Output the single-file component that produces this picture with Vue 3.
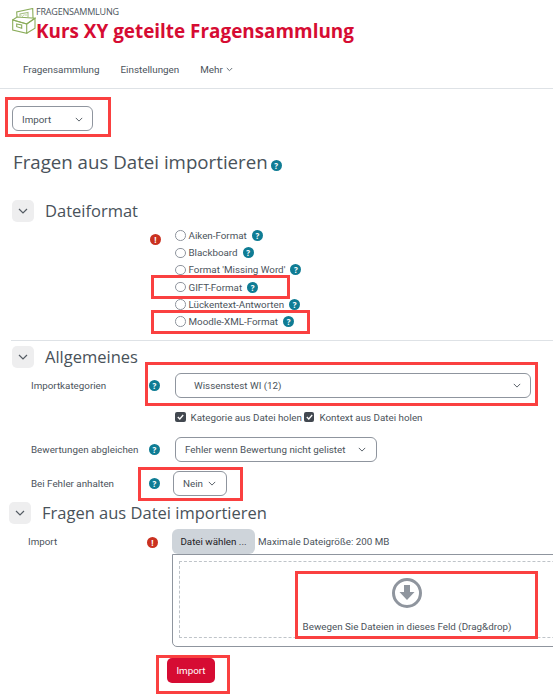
<template>
  <div class="page">
    <header class="page-head">
      <div class="brand">
        <svg class="logo" viewBox="0 0 24 26" width="24" height="26" fill="none" stroke="#8bad5b" stroke-width="1.100">
          <path d="M5 9L4.700 4l16-3.500.3 9.500" />
          <path d="M8 8.500V6l8-1.500V9" stroke="#a9c285" />
          <path d="M9.500 7.500l1 1 1.500-2M12.500 7h2.500" stroke="#a9c285" stroke-width="0.800" />
          <path d="M.7 12L5 9l18 1.300-8.300 5.700z" />
          <path d="M.7 12v10l14 3.300V16z" />
          <path d="M14.700 16L23 10.300v10l-8.300 5" />
          <path d="M4.700 16l5 1v3.300l-5-1.600z" />
        </svg>
        <div class="brand-text">
          <div class="overline">FRAGENSAMMLUNG</div>
          <h1>Kurs XY geteilte Fragensammlung</h1>
        </div>
      </div>
      <nav class="tabs">
        <span v-for="t in tabs" :key="t">{{ t }}</span>
        <span class="more">Mehr
          <svg width="7" height="5" viewBox="0 0 7 5" fill="none" stroke="#6a737b"><path d="M.8 1l2.700 2.700L6.200 1" /></svg>
        </span>
      </nav>
    </header>

    <div class="tertiary">
      <div class="select action-select">
        <span>Import</span>
        <svg class="chev" width="8" height="5" viewBox="0 0 10 6"><path d="M1 1l4 4 4-4" /></svg>
      </div>
    </div>

    <h2>Fragen aus Datei importieren<i class="help big">?</i></h2>

    <div class="section-head first">
      <button class="toggle"><svg width="10" height="6" viewBox="0 0 10 6"><path d="M1 1l4 4 4-4" /></svg></button>
      <h3>Dateiformat</h3>
    </div>
    <div class="formats">
      <i class="err">!</i>
      <ul>
        <li v-for="f in formats" :key="f">
          <span class="radio"></span>{{ f }}<i class="help">?</i>
        </li>
      </ul>
    </div>

    <div class="section-head general">
      <button class="toggle"><svg width="10" height="6" viewBox="0 0 10 6"><path d="M1 1l4 4 4-4" /></svg></button>
      <h3>Allgemeines</h3>
    </div>

    <div class="form-row r-cat">
      <label>Importkategorien</label>
      <i class="help">?</i>
      <div class="select wide">
        <span>Wissenstest WI (12)</span>
        <svg class="chev" width="8" height="5" viewBox="0 0 10 6"><path d="M1 1l4 4 4-4" /></svg>
      </div>
    </div>
    <div class="checks">
      <span class="check"><svg width="7" height="6" viewBox="0 0 7 6" fill="none" stroke="#fff" stroke-width="1.300"><path d="M.8 3l2 2L6.200 1" /></svg></span>Kategorie aus Datei holen
      <span class="check second"><svg width="7" height="6" viewBox="0 0 7 6" fill="none" stroke="#fff" stroke-width="1.300"><path d="M.8 3l2 2L6.200 1" /></svg></span>Kontext aus Datei holen
    </div>
    <div class="form-row r-grade">
      <label>Bewertungen abgleichen</label>
      <i class="help">?</i>
      <div class="select grade">
        <span>Fehler wenn Bewertung nicht gelistet</span>
        <svg class="chev" width="8" height="5" viewBox="0 0 10 6"><path d="M1 1l4 4 4-4" /></svg>
      </div>
    </div>
    <div class="form-row r-stop">
      <label>Bei Fehler anhalten</label>
      <i class="help">?</i>
      <div class="select stop">
        <span>Nein</span>
        <svg class="chev" width="8" height="5" viewBox="0 0 10 6"><path d="M1 1l4 4 4-4" /></svg>
      </div>
    </div>

    <div class="section-head upload">
      <button class="toggle"><svg width="10" height="6" viewBox="0 0 10 6"><path d="M1 1l4 4 4-4" /></svg></button>
      <h3>Fragen aus Datei importieren</h3>
    </div>
    <div class="file-row">
      <label>Import</label>
      <i class="err">!</i>
      <div class="file-col">
        <div class="file-top">
          <button class="choose">Datei wählen ...</button>
          <span>Maximale Dateigröße: 200 MB</span>
        </div>
        <div class="drop">
          <div class="drop-inner">
            <svg width="32" height="32" viewBox="0 0 32 32">
              <circle cx="16" cy="16" r="13.500" fill="none" stroke="#8f959e" stroke-width="3" />
              <path d="M13 8h6v7h4.500L16 23l-7.500-8H13z" fill="#8f959e" />
            </svg>
            <span>Bewegen Sie Dateien in dieses Feld (Drag&amp;drop)</span>
          </div>
        </div>
      </div>
    </div>
    <div class="submit-row">
      <button class="submit">Import</button>
    </div>

    <!-- annotation boxes drawn over the screenshot -->
    <div
      v-for="m in marks"
      :key="m.id"
      class="mark"
      :style="{ left: m.x + 'px', top: m.y + 'px', width: m.w + 'px', height: m.h + 'px' }"
    ></div>
  </div>
</template>

<script setup>
const tabs = ["Fragensammlung", "Einstellungen"];

const formats = [
  "Aiken-Format",
  "Blackboard",
  "Format 'Missing Word'",
  "GIFT-Format",
  "Lückentext-Antworten",
  "Moodle-XML-Format",
];

const marks = [
  { id: "action", x: 5, y: 97, w: 106, h: 40 },
  { id: "gift", x: 151, y: 275, w: 139, h: 24 },
  { id: "xml", x: 151, y: 310, w: 159, h: 24 },
  { id: "cat", x: 145, y: 362, w: 393, h: 44 },
  { id: "stop", x: 138, y: 467, w: 105, h: 34 },
  { id: "drop", x: 295, y: 571, w: 243, h: 68 },
  { id: "submit", x: 156, y: 655, w: 74, h: 39 },
];
</script>

<style>
html,
body {
  margin: 0;
  overflow: hidden;
  background: #fff;
}
</style>

<style scoped>
.page {
  position: relative;
  width: 553px;
  height: 695px;
  overflow: hidden;
  font-family: Roboto, "Open Sans", sans-serif;
  font-size: 9.800px;
  color: #4b535b;
}

.page-head {
  height: 88px;
  border-bottom: 1px solid #dee2e6;
}

.brand {
  display: flex;
  padding: 7px 0 0 12px;
  height: 50px;
  box-sizing: border-box;
}

.logo {
  margin-top: 1px;
}

.overline {
  font-family: "Open Sans", sans-serif;
  font-size: 9px;
  line-height: 10px;
  letter-spacing: -0.2px;
}

h1 {
  margin: 1px 0 0;
  font-family: "Open Sans", sans-serif;
  font-size: 18.900px;
  line-height: 26px;
  font-weight: 700;
  color: #d60c33;
  white-space: nowrap;
}

.tabs {
  display: flex;
  gap: 21px;
  padding: 12px 0 0 23px;
  font-size: 9.850px;
  line-height: 16px;
}

.more svg {
  margin-left: 1px;
  vertical-align: 1px;
}

.tertiary {
  padding: 17px 0 0 12px;
}

.select {
  display: flex;
  align-items: center;
  justify-content: space-between;
  box-sizing: border-box;
  height: 25px;
  border: 1px solid #8f959e;
  border-radius: 6px;
  background: #fff;
  white-space: nowrap;
}

.chev path,
.toggle path {
  fill: none;
  stroke: #555c64;
  stroke-width: 1.200;
}

.action-select {
  width: 81px;
  padding: 1px 9px 0;
}

h2 {
  margin: 18px 0 0 13px;
  font-family: "Open Sans", sans-serif;
  font-size: 18.700px;
  line-height: 26px;
  font-weight: 400;
  color: #49525a;
  white-space: nowrap;
}

h3 {
  margin: 0;
  font-family: "Open Sans", sans-serif;
  font-size: 16.500px;
  line-height: 22px;
  font-weight: 400;
  color: #49525a;
  white-space: nowrap;
}

.help,
.err {
  display: inline-block;
  flex: none;
  width: 11px;
  height: 11px;
  border-radius: 50%;
  background: #0f7c94;
  color: #fff;
  font-family: "Open Sans", sans-serif;
  font-style: normal;
  font-weight: 700;
  font-size: 8px;
  line-height: 11px;
  text-align: center;
}

.err {
  background: #ca3120;
}

.help.big {
  margin-left: 3px;
}

.section-head {
  display: flex;
  align-items: center;
  gap: 11px;
}

.toggle {
  display: flex;
  align-items: center;
  justify-content: center;
  width: 22px;
  height: 22px;
  padding: 0;
  border: 0;
  border-radius: 5px;
  background: #eeeeef;
}

.section-head.first {
  margin: 25px 0 0 12px;
}

.formats {
  display: grid;
  grid-template-columns: 175px 1fr;
  margin-top: 5px;
}

.formats .err {
  justify-self: end;
  margin: 7px 14px 0 0;
}

.formats ul {
  list-style: none;
  margin: 0;
  padding: 0;
}

.formats li {
  display: flex;
  align-items: center;
  height: 17.200px;
  white-space: nowrap;
}

.formats li .help {
  margin-left: 5px;
}

.radio {
  box-sizing: border-box;
  width: 10.500px;
  height: 10.500px;
  margin-right: 3px;
  border: 1px solid #8f959e;
  border-radius: 50%;
  background: #fff;
}

.section-head.general {
  margin: 10px 0 0 11px;
  padding: 5px 0 0 1px;
  border-top: 1px solid #dee2e6;
}

.form-row {
  display: grid;
  grid-template-columns: 149px 26px 1fr;
  align-items: center;
  white-space: nowrap;
}

.form-row label {
  padding-left: 31px;
}

.r-cat {
  margin-top: 5px;
}

.wide {
  width: 356px;
  padding: 0 9px 0 18px;
}

.checks {
  display: flex;
  align-items: center;
  height: 14px;
  margin: 12px 0 0 175px;
  white-space: nowrap;
}

.check {
  display: inline-flex;
  align-items: center;
  justify-content: center;
  width: 10.500px;
  height: 10.500px;
  margin-right: 5px;
  border-radius: 2px;
  background: #424850;
}

.check.second {
  margin-left: 2px;
}

.r-grade {
  margin-top: 13px;
}

.grade {
  width: 202px;
  padding: 0 10px 0 9px;
}

.r-stop {
  margin-top: 9px;
}

.stop {
  width: 54px;
  margin-left: -2px;
  padding: 0 10px 0 9px;
}

.section-head.upload {
  margin: 6px 0 0 9px;
}

.file-row {
  display: grid;
  grid-template-columns: 146px 26px 1fr;
  margin-top: 5px;
}

.file-row label {
  padding: 7px 0 0 28px;
}

.file-row .err {
  margin: 7.500px 0 0 1px;
}

.file-top {
  display: flex;
  align-items: center;
  gap: 3px;
  white-space: nowrap;
}

.file-top span {
  margin-top: -1px;
}

.choose {
  width: 83px;
  height: 25px;
  padding: 0;
  border: 0;
  border-radius: 6px;
  background: #ced4da;
  color: #1d2125;
  font: inherit;
}

.drop {
  box-sizing: border-box;
  width: 470px;
  height: 93px;
  padding: 6px 6px 8px;
  border: 1px solid #8f959e;
  border-radius: 0 0 0 5px;
}

.drop-inner {
  display: flex;
  flex-direction: column;
  align-items: center;
  height: 100%;
  box-sizing: border-box;
  padding-top: 15px;
  border: 1px dashed #bfc4c9;
  white-space: nowrap;
}

.drop-inner span {
  margin-top: 12px;
}

.submit-row {
  padding: 11px 0 0 167px;
}

.submit {
  width: 48px;
  height: 25px;
  padding: 0;
  border: 0;
  border-radius: 5px;
  background: #d60c33;
  color: #fff;
  font: inherit;
}

.mark {
  position: absolute;
  box-sizing: border-box;
  border: 3px solid #fa4040;
  pointer-events: none;
}
</style>
